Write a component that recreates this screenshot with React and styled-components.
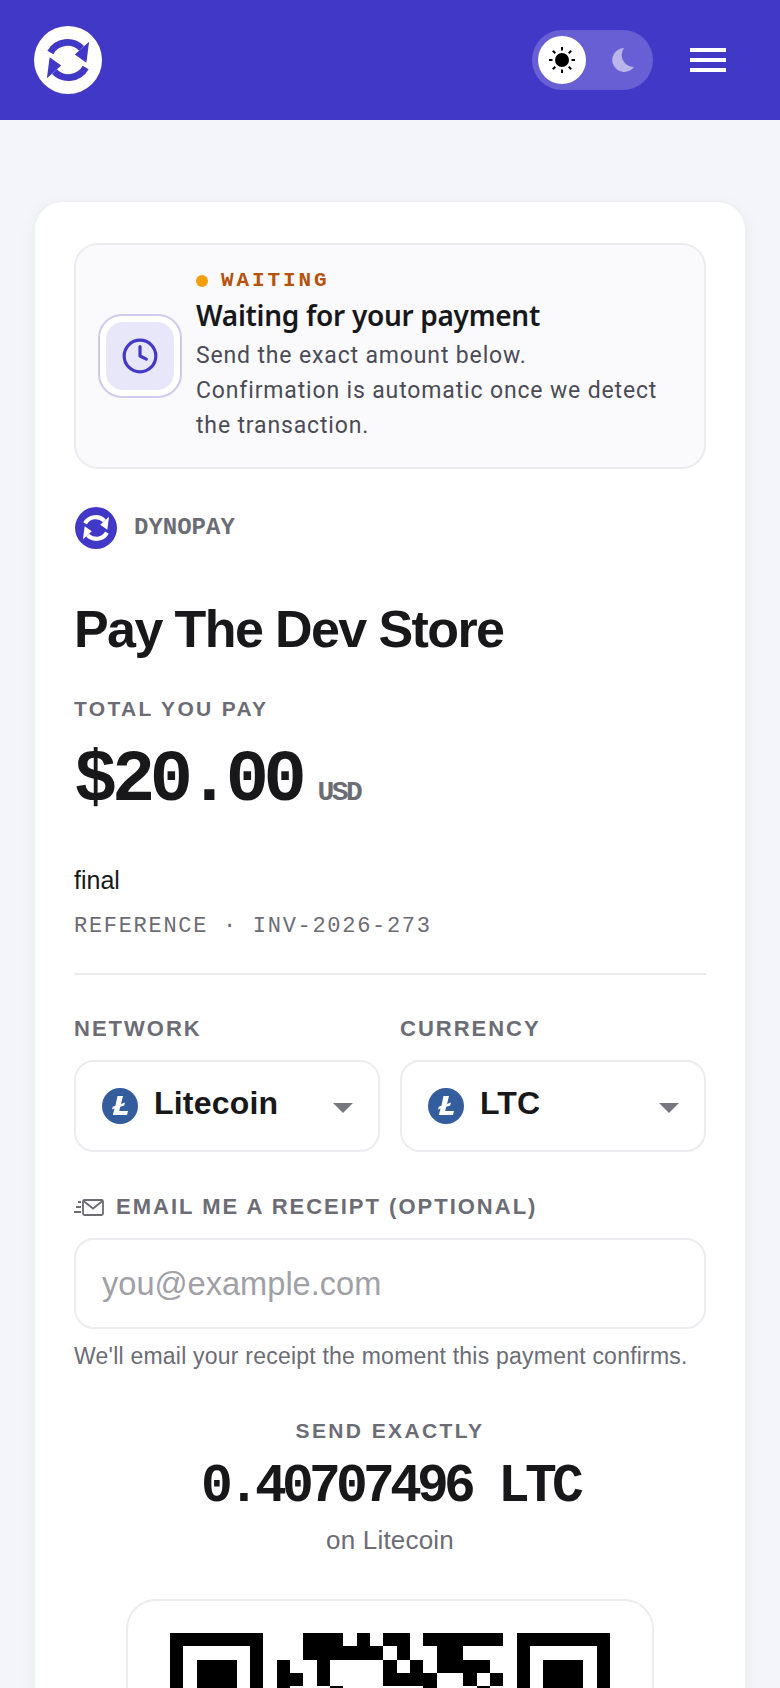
import React from 'react';
import styled, { createGlobalStyle } from 'styled-components';
import { Clock } from 'lucide-react';

const GlobalStyle = createGlobalStyle`
    html, body {
        margin: 0;
        padding: 0;
        background: #f4f5fa;
    }
    #root {
        height: 1688px;
        overflow: hidden;
    }
    * {
        box-sizing: border-box;
    }
`;

const SANS = '"Liberation Sans", Arial, sans-serif';
const MONO = '"Liberation Mono", "Courier New", monospace';
const BRAND = '#4238c8';
const MUTED = '#6c6c75';
const INK = '#18181b';
const LINE = '#ececf0';

const Page = styled.div`
    font-family: ${SANS};
    color: ${INK};
`;

const Header = styled.header`
    height: 120px;
    background: ${BRAND};
    padding: 0 54px 0 34px;
    display: flex;
    align-items: center;
    justify-content: space-between;
`;

const HeaderActions = styled.div`
    display: flex;
    align-items: center;
    gap: 37px;
`;

const ThemeToggle = styled.div`
    width: 121px;
    height: 60px;
    padding: 6px 18px 6px 6px;
    border-radius: 30px;
    background: rgba(255, 255, 255, 0.2);
    display: flex;
    align-items: center;
    justify-content: space-between;
`;

const ToggleKnob = styled.div`
    width: 48px;
    height: 48px;
    border-radius: 50%;
    background: #fff;
    display: flex;
    align-items: center;
    justify-content: center;
`;

const Burger = styled.div`
    width: 36px;
    display: flex;
    flex-direction: column;
    gap: 6px;
`;

const BurgerBar = styled.span`
    display: block;
    height: 4px;
    background: #fff;
`;

const Main = styled.main`
    padding: 80px 33px 0;
`;

const Card = styled.section`
    background: #fff;
    border: 2px solid #eff0f4;
    border-radius: 30px;
    padding: 41px 39px;
    box-shadow: 0 4px 18px rgba(30, 30, 60, 0.04);
`;

const StatusBox = styled.div`
    height: 226px;
    background: #fafafd;
    border: 2px solid ${LINE};
    border-radius: 24px;
    padding: 0 22px;
    display: flex;
    align-items: center;
    gap: 14px;
`;

const StatusIcon = styled.div`
    flex: none;
    width: 84px;
    height: 84px;
    padding: 6px;
    border: 2px solid #cfcbee;
    border-radius: 24px;
    background: #fff;
`;

const StatusTile = styled.div`
    height: 100%;
    border-radius: 17px;
    background: #e8e7f9;
    color: ${BRAND};
    display: flex;
    align-items: center;
    justify-content: center;
`;

const StatusText = styled.div`
    min-width: 0;
`;

const StatusTag = styled.div`
    display: flex;
    align-items: center;
    gap: 13px;
    font: 700 21px/24px ${MONO};
    letter-spacing: 2.9px;
    color: #b45309;
`;

const Dot = styled.span`
    width: 12px;
    height: 12px;
    border-radius: 50%;
    background: #f59e0b;
`;

const StatusTitle = styled.div`
    margin-top: 3px;
    font: 600 28px/38px "Noto Sans", sans-serif;
    letter-spacing: -0.3px;
    color: ${INK};
`;

const StatusBody = styled.div`
    margin-top: 4px;
    font: 400 23px/35px Roboto, sans-serif;
    letter-spacing: 0.85px;
    color: #4b4b55;
`;

const Brand = styled.div`
    margin-top: 38px;
    padding-left: 1px;
    display: flex;
    align-items: center;
    gap: 17px;
    font: 700 24px/42px ${MONO};
    color: ${MUTED};
`;

const Title = styled.h1`
    margin: 49px 0 0;
    font: 700 52px/62px ${SANS};
    letter-spacing: -1.6px;
    color: ${INK};
`;

const Label = styled.div`
    font: 700 ${props => props.size || 22}px/26px ${SANS};
    letter-spacing: ${props => props.spacing || 2}px;
    color: ${MUTED};
    text-align: ${props => props.center ? 'center' : 'left'};
`;

const TotalLabel = styled(Label)`
    margin-top: 36px;
`;

const TotalRow = styled.div`
    margin-top: 17px;
    display: flex;
    align-items: baseline;
    gap: 16px;
`;

const TotalAmount = styled.div`
    font: 700 72px/84px ${MONO};
    letter-spacing: -5.3px;
    color: ${INK};
`;

const TotalCurrency = styled.div`
    font: 700 28px/34px ${MONO};
    letter-spacing: -2.5px;
    color: ${MUTED};
`;

const Note = styled.div`
    margin-top: 41px;
    font: 400 25px/32px ${SANS};
    color: ${INK};
`;

const Reference = styled.div`
    margin-top: 17px;
    padding-bottom: 32px;
    border-bottom: 2px solid ${LINE};
    font: 400 22px/28px ${MONO};
    letter-spacing: 1.7px;
    color: ${MUTED};
`;

const SelectGrid = styled.div`
    margin-top: 41px;
    display: grid;
    grid-template-columns: 1fr 1fr;
    gap: 20px;
`;

const SelectBox = styled.div`
    margin-top: 18px;
    height: 92px;
    padding: 0 25px 0 26px;
    border: 2px solid ${LINE};
    border-radius: 20px;
    display: flex;
    align-items: center;
    gap: 16px;
    font: 700 32px/40px ${SANS};
    letter-spacing: 0.2px;
    color: ${INK};
`;

const SelectValue = styled.span`
    flex: 1;
    margin-top: -6px;
`;

const Caret = styled.span`
    width: 0;
    height: 0;
    border-left: 10px solid transparent;
    border-right: 10px solid transparent;
    border-top: 10px solid #77777f;
    margin-top: 4px;
`;

const ReceiptLabel = styled.div`
    margin-top: 42px;
    display: flex;
    align-items: center;
    gap: 12px;
`;

const EmailInput = styled.input`
    display: block;
    width: 100%;
    height: 91px;
    margin-top: 18px;
    padding: 0 26px;
    border: 2px solid ${LINE};
    border-radius: 20px;
    background: #fff;
    font: 400 32.6px/40px ${SANS};
    outline: none;

    &::placeholder {
        color: #a0a0a6;
        opacity: 1;
    }
`;

const Hint = styled.div`
    margin-top: 12px;
    font: 400 23px/30px ${SANS};
    letter-spacing: 0.22px;
    color: ${MUTED};
`;

const SendBlock = styled.div`
    margin-top: 47px;
    text-align: center;
`;

const SendAmount = styled.div`
    margin-top: 12px;
    font: 700 53px/62px ${MONO};
    letter-spacing: -4.8px;
    color: ${INK};
`;

const SendNetwork = styled.div`
    margin-top: 6px;
    font: 400 26px/32px ${SANS};
    letter-spacing: 0.2px;
    color: ${MUTED};
`;

const QrPanel = styled.div`
    width: 528px;
    margin: 43px auto 0;
    padding: 32px 0;
    border: 2px solid ${LINE};
    border-radius: 30px;
    display: flex;
    justify-content: center;
`;

const QR_ROWS = {
    0: [10, 11, 12, 14, 16, 17, 19, 20, 21, 22, 23, 24],
    1: [10, 11, 12, 13, 14, 15, 17, 20, 21],
    2: [8, 11, 16, 18, 20, 21, 22, 23],
    3: [8, 9, 11, 16, 17, 18, 19, 22, 24],
    4: [8, 12, 19, 23],
};

const FINDER_COLUMNS = [0, 26];

const SUN_RAYS = [0, 45, 90, 135, 180, 225, 270, 315];

const SyncMark = ({ size, color, bg }) => (
    <svg width={size} height={size} viewBox="0 0 100 100">
        <circle cx="50" cy="50" r="50" fill={bg} />
        {[0, 180].map(angle => (
            <g key={angle} transform={`rotate(${angle} 50 50)`}>
                <path d="M24 39 A29 29 0 0 1 70 33" fill="none" stroke={color} strokeWidth="10" />
                <polygon points="81,23 60,42 77,54" fill={color} />
            </g>
        ))}
    </svg>
);

const LitecoinIcon = () => (
    <svg width="36" height="36" viewBox="0 0 36 36">
        <circle cx="18" cy="18" r="18" fill="#345d9d" />
        <polygon
            points="15.5,8 21,8 19,16 23,14.6 22.2,17.4 18.2,18.8 17.2,23 26,23 25,27 10.8,27 12.6,20.4 10,21.4 10.8,18.8 13.4,17.8"
            fill="#fff"
        />
    </svg>
);

const SunIcon = () => (
    <svg width="28" height="28" viewBox="0 0 28 28">
        <circle cx="14" cy="14" r="7" fill="#000" />
        {SUN_RAYS.map(angle => (
            <rect key={angle} x="13" y="1" width="2" height="3.5" fill="#000" transform={`rotate(${angle} 14 14)`} />
        ))}
    </svg>
);

const MoonIcon = () => (
    <svg width="24" height="26" viewBox="0 0 24 26">
        <path d="M13 1 A12 12 0 1 0 23 20 A12 12 0 0 1 13 1Z" fill="#b9b5ec" />
    </svg>
);

const MailFastIcon = () => (
    <svg width="30" height="18" viewBox="0 0 30 18" fill="none" stroke={MUTED} strokeWidth="1.8">
        <rect x="9" y="2" width="20" height="15" rx="1.5" />
        <path d="M9.5 3 L19 10.5 L28.5 3" />
        <path d="M4 4 H7 M2 9 H7 M0 14 H7" strokeWidth="2" />
    </svg>
);

const QrCode = () => (
    <svg width="440" height="440" viewBox="0 0 33 33" shapeRendering="crispEdges">
        {FINDER_COLUMNS.map(col => (
            <g key={col}>
                <path d={`M${col} 0 h7 v7 h-7 Z M${col + 1} 1 v5 h5 v-5 Z`} fillRule="evenodd" />
                <rect x={col + 2} y="2" width="3" height="3" />
            </g>
        ))}
        {Object.entries(QR_ROWS).map(([row, cols]) =>
            cols.map(col => <rect key={`${row}-${col}`} x={col} y={row} width="1" height="1" />)
        )}
    </svg>
);

const App = () => (
    <Page>
        <GlobalStyle />
        <Header>
            <SyncMark size={68} color={BRAND} bg="#fff" />
            <HeaderActions>
                <ThemeToggle>
                    <ToggleKnob>
                        <SunIcon />
                    </ToggleKnob>
                    <MoonIcon />
                </ThemeToggle>
                <Burger>
                    <BurgerBar />
                    <BurgerBar />
                    <BurgerBar />
                </Burger>
            </HeaderActions>
        </Header>
        <Main>
            <Card>
                <StatusBox>
                    <StatusIcon>
                        <StatusTile>
                            <Clock size={38} strokeWidth={2} />
                        </StatusTile>
                    </StatusIcon>
                    <StatusText>
                        <StatusTag><Dot />WAITING</StatusTag>
                        <StatusTitle>Waiting for your payment</StatusTitle>
                        <StatusBody>
                            Send the exact amount below.<br />
                            Confirmation is automatic once we detect the transaction.
                        </StatusBody>
                    </StatusText>
                </StatusBox>
                <Brand>
                    <SyncMark size={42} color="#fff" bg={BRAND} />
                    DYNOPAY
                </Brand>
                <Title>Pay The Dev Store</Title>
                <TotalLabel size={21} spacing={2.33}>TOTAL YOU PAY</TotalLabel>
                <TotalRow>
                    <TotalAmount>$20.00</TotalAmount>
                    <TotalCurrency>USD</TotalCurrency>
                </TotalRow>
                <Note>final</Note>
                <Reference>REFERENCE · INV-2026-273</Reference>
                <SelectGrid>
                    <div>
                        <Label>NETWORK</Label>
                        <SelectBox>
                            <LitecoinIcon />
                            <SelectValue>Litecoin</SelectValue>
                            <Caret />
                        </SelectBox>
                    </div>
                    <div>
                        <Label>CURRENCY</Label>
                        <SelectBox>
                            <LitecoinIcon />
                            <SelectValue>LTC</SelectValue>
                            <Caret />
                        </SelectBox>
                    </div>
                </SelectGrid>
                <ReceiptLabel>
                    <MailFastIcon />
                    <Label>EMAIL ME A RECEIPT (OPTIONAL)</Label>
                </ReceiptLabel>
                <EmailInput placeholder="you@example.com" />
                <Hint>We'll email your receipt the moment this payment confirms.</Hint>
                <SendBlock>
                    <Label center size={21} spacing={2.4}>SEND EXACTLY</Label>
                    <SendAmount>0.40707496 LTC</SendAmount>
                    <SendNetwork>on Litecoin</SendNetwork>
                </SendBlock>
                <QrPanel>
                    <QrCode />
                </QrPanel>
            </Card>
        </Main>
    </Page>
);

export default App;
